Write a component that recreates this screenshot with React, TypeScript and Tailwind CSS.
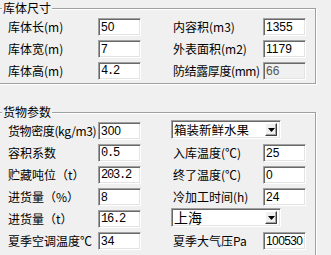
import React from "react";

const cjk = { fontFamily: '"Noto Sans CJK SC", "Noto Sans", sans-serif' };
const sans = { fontFamily: '"Liberation Sans", Arial, sans-serif' };
const mono = { fontFamily: '"Liberation Mono", monospace' };

function Field({ v, m, disabled, narrow }: { v: string; m?: boolean; disabled?: boolean; narrow?: boolean }) {
  return (
    <div
      className={`h-[18px] w-[43px] overflow-hidden whitespace-nowrap border border-t-[#a0a0a0] border-l-[#a0a0a0] border-r-white border-b-white shadow-[inset_1px_1px_0_#696969,inset_-1px_-1px_0_#e3e3e3] pl-[2px] pt-[1px] leading-[15px] text-[12px] ${
        disabled ? "bg-[#f0f0f0] text-[#555]" : "bg-white text-black"
      } ${m ? "tracking-[-1.2px]" : ""} ${narrow ? "tracking-[-0.6px]" : ""}`}
      style={m ? mono : sans}
    >
      {v}
    </div>
  );
}

function Label({ t, tight }: { t: string; tight?: boolean }) {
  return (
    <div
      className={`text-[12px] leading-[14px] text-black whitespace-nowrap ${tight ? "tracking-[-0.4px]" : ""}`}
      style={cjk}
    >
      {t}
    </div>
  );
}

function Select({ t, big }: { t: string; big?: boolean }) {
  return (
    <div className="-mt-[3px] self-start h-[19px] w-[110px] flex items-center justify-between border border-t-[#a0a0a0] border-l-[#a0a0a0] border-r-white border-b-white shadow-[inset_1px_1px_0_#696969,inset_-1px_-1px_0_#e3e3e3] bg-white pl-[2px] pr-[3px]">
      <span className={`${big ? "text-[14px]" : "text-[12.5px]"} leading-[15px] text-black`} style={cjk}>
        {t}
      </span>
      <div className="h-[13px] w-[12px] bg-[#f0f0f0] border border-t-white border-l-white border-r-[#404040] border-b-[#404040] shadow-[inset_-1px_-1px_0_#a0a0a0] flex items-center justify-center">
        <svg width="7" height="4" viewBox="0 0 7 4">
          <path d="M0 0H7L3.5 4Z" fill="#000" />
        </svg>
      </div>
    </div>
  );
}

function Group({ title, children, className }: { title: string; children: React.ReactNode; className?: string }) {
  return (
    <fieldset
      className={`-ml-[6px] w-[322px] border border-[#a0a0a0] pl-[7px] pr-0 shadow-[1px_1px_0_white,inset_1px_1px_0_white] ${className ?? ""}`}
    >
      <legend className="px-[1px] text-[12px] leading-[14px] text-black bg-[#f0f0f0]" style={cjk}>
        {title}
      </legend>
      {children}
    </fieldset>
  );
}

export default function App() {
  return (
    <div className="w-[331px] h-[255px] bg-[#f0f0f0] overflow-hidden pt-[1px]">
      <Group title="库体尺寸" className="pt-[1px] pb-[1px]">
        <div className="ml-[6px] grid grid-cols-[90px_43px_32px_90px_43px] auto-rows-[22px] items-center">
          <Label t="库体长(m)" />
          <Field v="50" />
          <div />
          <Label t="内容积(m3)" />
          <Field v="1355" />

          <Label t="库体宽(m)" />
          <Field v="7" />
          <div />
          <Label t="外表面积(m2)" />
          <Field v="1179" />

          <Label t="库体高(m)" />
          <Field v="4.2" m />
          <div />
          <Label t="防结露厚度(mm)" tight />
          <Field v="66" disabled />
        </div>
      </Group>

      <Group title="货物参数" className="mt-[21px] pt-[1px] pb-[4px]">
        <div className="ml-[6px] grid grid-cols-[90px_43px_30px_92px_43px] auto-rows-[22px] items-center">
          <Label t="货物密度(kg/m3)" tight />
          <Field v="300" />
          <div />
          <div className="col-span-2 flex">
            <Select t="箱装新鲜水果" />
          </div>

          <Label t="容积系数" />
          <Field v="0.5" m />
          <div />
          <div className="pl-[2px]"><Label t="入库温度(℃)" /></div>
          <Field v="25" />

          <Label t="贮藏吨位（t）" />
          <Field v="203.2" m />
          <div />
          <div className="pl-[2px]"><Label t="终了温度(℃)" /></div>
          <Field v="0" />

          <Label t="进货量（%）" />
          <Field v="8" />
          <div />
          <div className="pl-[2px]"><Label t="冷加工时间(h)" /></div>
          <Field v="24" />

          <Label t="进货量（t）" />
          <Field v="16.2" m />
          <div />
          <div className="col-span-2 flex">
            <Select t="上海" big />
          </div>

          <Label t="夏季空调温度℃" />
          <Field v="34" />
          <div />
          <div className="pl-[2px]"><Label t="夏季大气压Pa" /></div>
          <Field v="100530" narrow />
        </div>
      </Group>
    </div>
  );
}
